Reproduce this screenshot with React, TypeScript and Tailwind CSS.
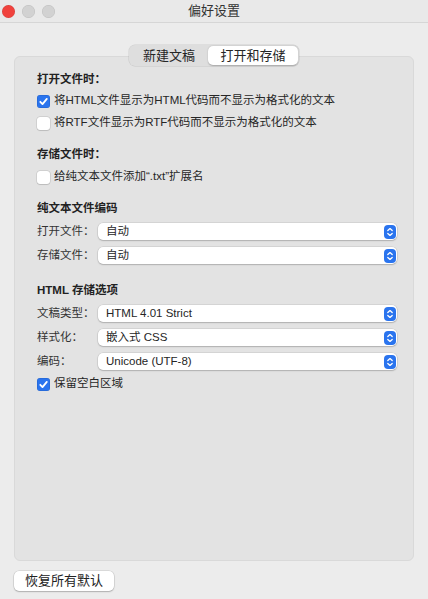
import React from 'react';

const FONT = '"Liberation Sans", "Noto Sans CJK SC", sans-serif';

function CheckBox({ checked }: { checked: boolean }) {
  if (checked) {
    return (
      <span className="flex h-[13px] w-[13px] items-center justify-center rounded-[3px] bg-[#2a74ee] shadow-[inset_0_0_0_0.5px_rgba(0,0,0,0.15)]">
        <svg width="11" height="11" viewBox="0 0 11 11">
          <path d="M2.3 5.8 L4.5 8.1 L8.8 2.9" fill="none" stroke="#fff" strokeWidth="1.8" strokeLinecap="round" strokeLinejoin="round" />
        </svg>
      </span>
    );
  }
  return (
    <span className="h-[13px] w-[13px] rounded-[3px] bg-white shadow-[0_0_0_0.5px_rgba(0,0,0,0.15),0_0.5px_1px_rgba(0,0,0,0.1)]" />
  );
}

function CheckRow({ checked, label, className }: { checked: boolean; label: string; className: string }) {
  return (
    <div className={`flex h-[20px] items-center gap-[4px] ${className}`}>
      <CheckBox checked={checked} />
      <span className="text-[11.5px] text-[#262626]">{label}</span>
    </div>
  );
}

function Stepper() {
  return (
    <span className="flex h-[14px] w-[12px] items-center justify-center rounded-[4px] bg-[#2a74ee]">
      <svg width="12" height="14" viewBox="0 0 12 14">
        <path d="M3.8 5.6 L6 3.6 L8.2 5.6" fill="none" stroke="#fff" strokeWidth="1.3" strokeLinecap="round" strokeLinejoin="round" />
        <path d="M3.8 8.4 L6 10.4 L8.2 8.4" fill="none" stroke="#fff" strokeWidth="1.3" strokeLinecap="round" strokeLinejoin="round" />
      </svg>
    </span>
  );
}

function SelectRow({ label, value, className }: { label: string; value: string; className: string }) {
  return (
    <div className={`grid h-[17px] grid-cols-[61px_1fr] items-center ${className}`}>
      <span className="text-[11.5px] text-[#333]">{label}</span>
      <div className="flex h-[17px] items-center justify-between rounded-[5px] bg-white pl-[8px] pr-[1px] shadow-[0_0_0_0.5px_rgba(0,0,0,0.12),0_1px_1.5px_rgba(0,0,0,0.18)]">
        <span className="text-[11.5px] text-[#262626]">{value}</span>
        <Stepper />
      </div>
    </div>
  );
}

function Heading({ text, className }: { text: string; className: string }) {
  return (
    <div className={`flex h-[16px] items-center text-[11.5px] font-bold text-[#222] ${className}`}>{text}</div>
  );
}

export default function App() {
  return (
    <div className="flex h-[599px] w-[428px] flex-col bg-[#ececec]" style={{ fontFamily: FONT }}>
      {/* title bar */}
      <div className="grid h-[23px] grid-cols-[1fr_auto_1fr] items-center border-b border-[#d6d6d6] bg-[#e9e9e9]">
        <div className="flex items-center gap-[7px] pl-[2px]">
          <span className="h-[13px] w-[13px] rounded-full bg-[#f0423d] shadow-[inset_0_0_0_0.5px_rgba(0,0,0,0.12)]" />
          <span className="h-[13px] w-[13px] rounded-full bg-[#d2d2d2] shadow-[inset_0_0_0_0.5px_rgba(0,0,0,0.1)]" />
          <span className="h-[13px] w-[13px] rounded-full bg-[#d2d2d2] shadow-[inset_0_0_0_0.5px_rgba(0,0,0,0.1)]" />
        </div>
        <span className="text-[13px] text-[#333]">偏好设置</span>
        <div />
      </div>

      <div className="flex flex-1 flex-col px-[14px]">
        {/* tabs */}
        <div className="relative z-10 mt-[22px] flex justify-center">
          <div className="flex h-[21px] items-center rounded-[6px] bg-[#dedede] p-[1px] shadow-[0_0_0_0.5px_rgba(0,0,0,0.12)]">
            <div className="flex h-[19px] w-[78px] items-center justify-center text-[13px] text-[#262626]">新建文稿</div>
            <div className="flex h-[19px] w-[90px] items-center justify-center rounded-[5px] bg-white text-[13px] text-[#262626] shadow-[0_0.5px_1.5px_rgba(0,0,0,0.25)]">
              打开和存储
            </div>
          </div>
        </div>

        {/* group box */}
        <div className="-mt-[10px] flex flex-1 flex-col rounded-[6px] border border-[#d9d9d9] bg-[#e3e3e3] pl-[22px] pr-[16px] pt-[15px]">
          <Heading text="打开文件时：" className="" />
          <CheckRow checked label="将HTML文件显示为HTML代码而不显示为格式化的文本" className="mt-[3px]" />
          <CheckRow checked={false} label="将RTF文件显示为RTF代码而不显示为格式化的文本" className="mt-[2px]" />

          <Heading text="存储文件时：" className="mt-[14px]" />
          <CheckRow checked={false} label="给纯文本文件添加“.txt”扩展名" className="mt-[4px]" />

          <Heading text="纯文本文件编码" className="mt-[14px]" />
          <SelectRow label="打开文件：" value="自动" className="mt-[6px]" />
          <SelectRow label="存储文件：" value="自动" className="mt-[7px]" />

          <Heading text="HTML 存储选项" className="mt-[19px]" />
          <SelectRow label="文稿类型：" value="HTML 4.01 Strict" className="mt-[6px]" />
          <SelectRow label="样式化：" value="嵌入式 CSS" className="mt-[7px]" />
          <SelectRow label="编码：" value="Unicode (UTF-8)" className="mt-[7px]" />
          <CheckRow checked label="保留空白区域" className="mt-[4px]" />
        </div>

        {/* footer */}
        <div className="mb-[8px] mt-[10px] flex">
          <button className="flex h-[20px] w-[100px] items-center justify-center rounded-[5px] bg-white text-[13px] text-[#222] shadow-[0_0_0_0.5px_rgba(0,0,0,0.15),0_1px_1.5px_rgba(0,0,0,0.2)]">
            恢复所有默认
          </button>
        </div>
      </div>
    </div>
  );
}
